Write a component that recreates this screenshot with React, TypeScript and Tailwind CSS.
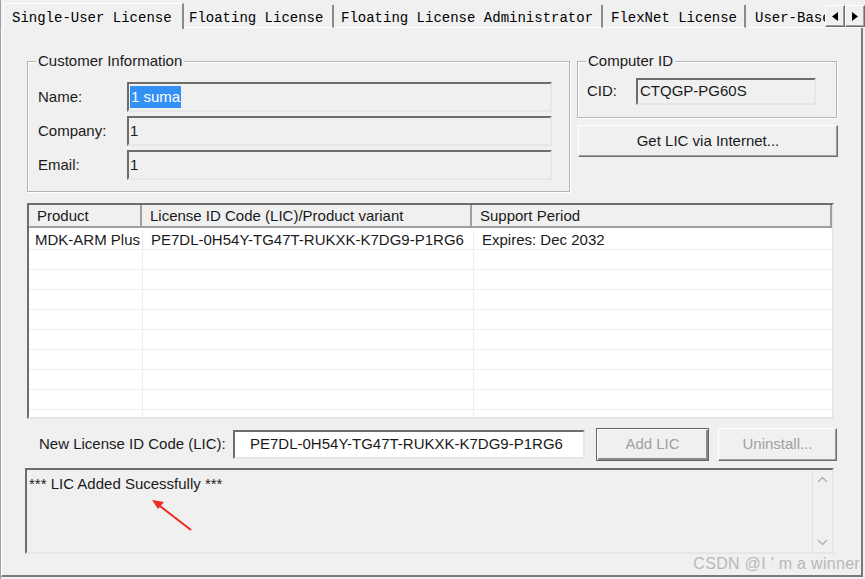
import React from 'react'

const sunken =
  'border-2 border-t-[#6d6d6d] border-l-[#6d6d6d] border-b-[#e6e6e6] border-r-[#e6e6e6]'
const raised =
  'border border-t-white border-l-white border-b-[#6d6d6d] border-r-[#6d6d6d] shadow-[inset_-1px_-1px_0_#a0a0a0]'

const tabs = [
  { label: 'Floating License', w: 'w-[150px]', pl: 'pl-[5px]' },
  { label: 'Floating License Administrator', w: 'w-[269px]', pl: 'pl-[7px]' },
  { label: 'FlexNet License', w: 'w-[143px]', pl: 'pl-[8px]' },
]

const Group = ({ title, className, children }: { title: string; className: string; children: React.ReactNode }) => (
  <div className={`relative border border-[#b4b4b4] shadow-[inset_1px_1px_0_#fff,1px_1px_0_#fff] ${className}`}>
    <span className="absolute left-[8px] top-[-10px] bg-[#f0f0f0] px-[2px] leading-[18px] text-[#1a1a1a]">
      {title}
    </span>
    {children}
  </div>
)

const Field = ({ label, value, selected }: { label: string; value: string; selected?: boolean }) => (
  <div className="flex items-center">
    <span className="w-[99px] pl-[10px]">{label}</span>
    <div className={`h-[30px] w-[425px] ${sunken} flex items-center pl-[1px] bg-[#f0f0f0]`}>
      {selected ? <span className="bg-[#3391f5] text-white px-[1px]">{value}</span> : <span>{value}</span>}
    </div>
  </div>
)

const rows = Array.from({ length: 9 })

export default function App() {
  return (
    <div className="relative w-[865px] h-[579px] overflow-hidden bg-[#f0f0f0] text-[15px] text-[#1a1a1a] font-['Liberation_Sans',Arial,sans-serif] border-l border-[#a0a0a0]">
      {/* tab strip */}
      <div className="flex h-[28px] items-end pl-[2px] font-['Liberation_Mono',monospace] text-[14px] text-black">
        <div className="h-[26px] w-[181px] pl-[8px] pt-[4px] border-l border-t border-white border-r-2 border-r-[#8a8a8a] bg-[#f0f0f0] relative z-10 -mb-px">
          Single-User License
        </div>
        {tabs.map((t) => (
          <div
            key={t.label}
            className={`h-[23px] ${t.w} ${t.pl} pt-[3px] border-r-2 border-r-[#8a8a8a] border-b border-b-white whitespace-nowrap`}
          >
            {t.label}
          </div>
        ))}
        <div className="h-[23px] flex-1 pl-[9px] pt-[3px] border-b border-b-white whitespace-nowrap overflow-hidden relative">
          User-Base
          <div className="absolute right-0 top-0 flex">
            <div className={`w-[20px] h-[22px] ${raised} bg-[#f0f0f0] flex items-center justify-center`}>
              <svg width="6" height="9" viewBox="0 0 6 9"><path d="M6 0 L0 4.5 L6 9 Z" fill="#000" /></svg>
            </div>
            <div className={`w-[20px] h-[22px] ${raised} bg-[#f0f0f0] flex items-center justify-center`}>
              <svg width="6" height="9" viewBox="0 0 6 9"><path d="M0 0 L6 4.5 L0 9 Z" fill="#000" /></svg>
            </div>
          </div>
        </div>
      </div>

      {/* panel */}
      <div className="w-[862px] h-[549px] border-l border-white border-r-2 border-r-[#7a7a7a] border-b-2 border-b-[#7a7a7a] pl-[25px] pt-[33px]">
        <div className="flex gap-[7px]">
          <Group title="Customer Information" className="w-[543px] h-[131px] pt-[20px]">
            <div className="flex flex-col gap-[4px]">
              <Field label="Name:" value="1 suma" selected />
              <Field label="Company:" value="1" />
              <Field label="Email:" value="1" />
            </div>
          </Group>
          <div className="flex flex-col gap-[7px]">
            <Group title="Computer ID" className="w-[260px] h-[57px] pt-[16px]">
              <div className="flex items-center">
                <span className="w-[58px] pl-[9px]">CID:</span>
                <div className={`h-[27px] w-[180px] ${sunken} flex items-center pl-[2px]`}>CTQGP-PG60S</div>
              </div>
            </Group>
            <div className={`ml-[1px] h-[32px] w-[260px] ${raised} flex items-center justify-center`}>
              Get LIC via Internet...
            </div>
          </div>
        </div>

        {/* list view */}
        <div className={`mt-[11px] w-[807px] h-[216px] ${sunken} bg-white overflow-hidden`}>
          <div className="flex h-[23px] bg-[#f0f0f0] border-b-2 border-b-[#a0a0a0]">
            <div className="w-[113px] pl-[8px] border-r-2 border-r-[#a0a0a0] leading-[21px]">Product</div>
            <div className="w-[330px] pl-[8px] border-r-2 border-r-[#a0a0a0] leading-[21px]">License ID Code (LIC)/Product variant</div>
            <div className="flex-1 pl-[8px] border-r-2 border-r-[#a0a0a0] leading-[21px]">Support Period</div>
          </div>
          <div className="flex h-[22px] border-b border-[#eeeeee] leading-[19px] pt-[2px]">
            <div className="w-[114px] pl-[6px] border-r border-[#eeeeee] whitespace-nowrap">MDK-ARM Plus</div>
            <div className="w-[331px] pl-[8px] border-r border-[#eeeeee] whitespace-nowrap">PE7DL-0H54Y-TG47T-RUKXK-K7DG9-P1RG6</div>
            <div className="flex-1 pl-[8px]">Expires: Dec 2032</div>
          </div>
          {rows.map((_, i) => (
            <div key={i} className="flex h-[20px] border-b border-[#eeeeee]">
              <div className="w-[114px] border-r border-[#eeeeee]" />
              <div className="w-[331px] border-r border-[#eeeeee]" />
              <div className="flex-1" />
            </div>
          ))}
        </div>

        {/* new lic row */}
        <div className="mt-[9px] flex items-center h-[33px]">
          <span className="pl-[12px] w-[206px] whitespace-nowrap">New License ID Code (LIC):</span>
          <div className={`h-[29px] w-[352px] ${sunken} bg-white flex items-center pl-[15px]`}>
            PE7DL-0H54Y-TG47T-RUKXK-K7DG9-P1RG6
          </div>
          <div className="ml-[11px] h-[33px] w-[113px] border border-[#646464] flex items-center justify-center text-[#a0a0a0] shadow-[inset_1px_1px_0_#fff,inset_-2px_-2px_0_#8a8a8a]">
            Add LIC
          </div>
          <div className={`ml-[9px] h-[33px] w-[119px] ${raised} flex items-center justify-center text-[#a0a0a0]`}>
            Uninstall...
          </div>
        </div>

        {/* status box */}
        <div className={`mt-[7px] -ml-[2px] w-[809px] h-[86px] ${sunken} flex`}>
          <div className="flex-1 pl-[2px] pt-[4px] leading-[20px]">*** LIC Added Sucessfully ***</div>
          <div className="w-[20px] border-l border-[#e2e2e2] flex flex-col items-center justify-between py-[6px] text-[#b0b0b0]">
            <svg width="11" height="7" viewBox="0 0 11 7"><path d="M1 6 L5.5 1.5 L10 6" fill="none" stroke="currentColor" strokeWidth="1.3" /></svg>
            <svg width="11" height="7" viewBox="0 0 11 7"><path d="M1 1 L5.5 5.5 L10 1" fill="none" stroke="currentColor" strokeWidth="1.3" /></svg>
          </div>
        </div>
      </div>

      {/* red annotation arrow */}
      <svg className="absolute left-[145px] top-[493px]" width="52" height="44" viewBox="0 0 52 44">
        <line x1="45" y1="37" x2="10" y2="10" stroke="#ec2b24" strokeWidth="2" />
        <path d="M6 7 L18 9 L12 16 Z" fill="#ec2b24" />
      </svg>

      {/* watermark */}
      <span className="absolute right-[5px] top-[552px] text-[16px] tracking-[0.3px] text-[#b8b8b8] whitespace-nowrap">
        CSDN @I ' m a winner
      </span>
    </div>
  )
}
